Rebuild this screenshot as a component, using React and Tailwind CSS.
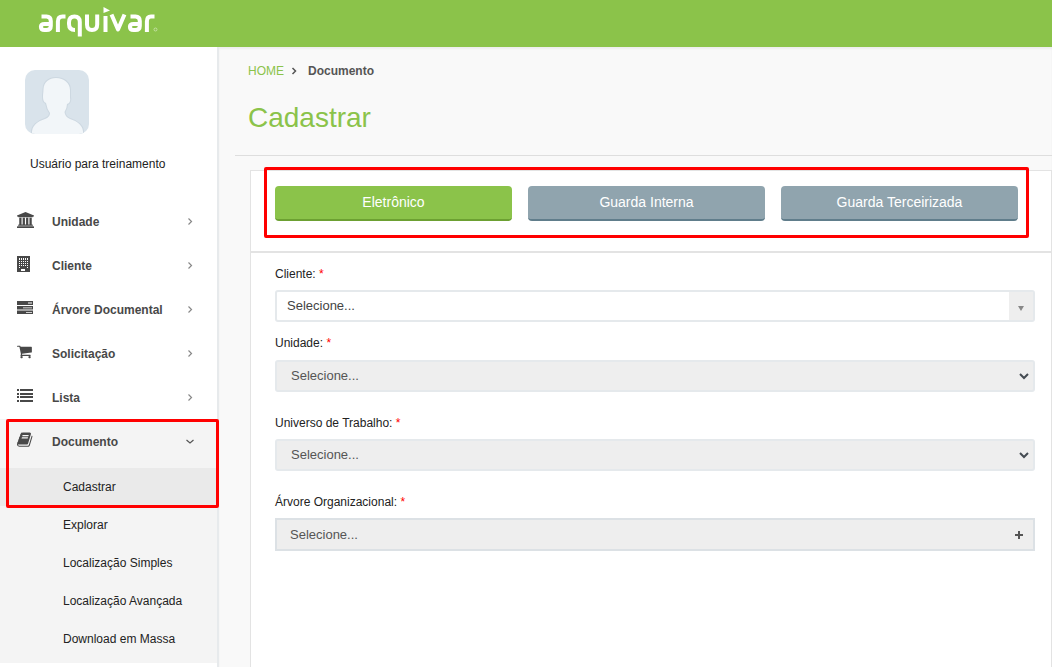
import React from "react";

const stroke = { fill: "none", stroke: "currentColor" };

function Logo() {
  return (
    <svg role="img" aria-label="arquivar" viewBox="0 0 120 32" className="h-8 w-[120px] text-white">
      <g {...stroke} strokeWidth="4" strokeLinejoin="round">
        <path d="M3.500 9.500H8.500Q12.800 9.500 12.800 14V19Q12.800 23 8.500 23H6.500Q2.900 23 2.900 19.800Q2.900 17 6.500 17H12" />
        <path d="M19.900 25V14.500Q19.900 9.500 24.500 9.500H27.500" />
        <path d="M37 23Q31 23 31 17V15.500Q31 9.500 36.500 9.500Q41.800 9.500 41.800 15V29.500" />
        <path d="M49 7.500V17.500Q49 23 54 23Q59.200 23 59.200 17.500V7.500" />
        <path d="M67.500 25V9" />
        <path d="M73.500 7.500L80 22.500L86.500 7.500" />
        <path d="M92.500 9.500H97.500Q101.800 9.500 101.800 14V19Q101.800 23 97.500 23H95.500Q91.900 23 91.900 19.800Q91.900 17 95.500 17H101" />
        <path d="M108.900 25V14.500Q108.900 9.500 113 9.500H116.500" />
      </g>
      <path d="M65.500 0L72 3.500L65.500 6Z" fill="currentColor" />
      <circle cx="117.500" cy="22.500" r="1.500" {...stroke} strokeWidth="0.600" opacity="0.700" />
    </svg>
  );
}

function Avatar() {
  const body = "M7 64C6 56 13 51 20 49Q25 47 25 43Q22 39 21 33Q18 32 18 27C18 23 18.500 22 18.500 19C19 12 24 8 31 8C39 8 45 13 45 20V27Q46 33 42 34Q42 38 39.500 42Q40 47 45 49C52 51 59 56 58 64Z";
  return (
    <svg role="img" aria-label="Foto do usuário" viewBox="0 0 64 64" className="size-16 rounded-[10px] bg-[#d9e3eb]">
      <path d={body} {...stroke} strokeWidth="2" className="text-[#c5d1da]" opacity="0.600" />
      <path d={body} fill="#f2f6f9" />
    </svg>
  );
}

const shapes = {
  bank: ["0 0 1920 1792", "M960 0l960 384v128h-128q0 26-20.5 45t-48.5 19h-1526q-28 0-48.5-19t-20.5-45h-128v-128zM256 640h256v768h128v-768h256v768h128v-768h256v768h128v-768h256v768h59q28 0 48.5 19t20.5 45v64h-1664v-64q0-26 20.5-45t48.5-19h59v-768zM1851 1600q28 0 48.5 19t20.5 45v128h-1920v-128q0-26 20.5-45t48.5-19h1782z", "h-4 w-[17px]"],
  building: ["0 0 13 16", "M0 0h13v16H0zM2 2v2h1V2zM4 2v2h1V2zM6 2v2h1V2zM8 2v2h1V2zM10 2v2h1V2zM2 5v1h1V5zM4 5v1h1V5zM6 5v1h1V5zM8 5v1h1V5zM10 5v1h1V5zM2 7v1h1V7zM4 7v1h1V7zM6 7v1h1V7zM8 7v1h1V7zM10 7v1h1V7zM2 9v1h1V9zM4 9v1h1V9zM6 9v1h1V9zM8 9v1h1V9zM10 9v1h1V9zM2 11v1h1v-1zM10 11v1h1v-1zM4 13v2h4v-2z", "h-4 w-[13px]"],
  tasks: ["0 0 16 16", "M0 1h16v4H0zM11 2.500v1h4v-1zM0 6h16v3.500H0zM6 7.500v.8h9v-.8zM0 10.500h16V14H0zM9 12v.8h6V12z", "size-4"],
  cart: ["64 128 1792 1664", "M704 1536q0 52-38 90t-90 38-90-38-38-90 38-90 90-38 90 38 38 90zm896 0q0 52-38 90t-90 38-90-38-38-90 38-90 90-38 90 38 38 90zm128-1088v512q0 24-16.500 42.500t-40.500 21.500l-1044 122q13 60 13 70 0 16-24 64h920q26 0 45 19t19 45-19 45-45 19h-1024q-26 0-45-19t-19-45q0-11 8-31.500t16-36 21.500-40 15.500-29.500l-177-823h-204q-26 0-45-19t-19-45 19-45 45-19h256q16 0 28.500 6.500t19.500 15.500 13 24.500 8 26 5.500 29.500 4.500 26h1201q26 0 45 19t19 45z", "size-4"],
  list: ["0 0 16 16", "M0 1h2v2H0zM3 1h13v2H3zM0 5h2v2H0zM3 5h13v2H3zM0 8h2v2H0zM3 8h13v2H3zM0 12h2v2H0zM3 12h13v2H3z", "size-4"],
  book: ["64 64 1728 1728", "M1703 478q40 57 18 129l-275 906q-19 64-76.500 107.500t-122.500 43.500h-923q-77 0-148.500-53.500t-99.500-131.500q-24-67-2-127 0-4 3-27t4-37q1-8-3-21.500t-3-19.500q2-11 8-21t16.500-23.500 16.500-23.500q23-38 45-91.500t30-91.500q3-10 .5-30t-.5-28q3-11 17-28t17-23q21-36 42-92t25-90q1-9-2.500-32t.5-28q4-13 22-30.500t22-22.500q19-26 42.500-84.500t27.500-96.500q1-8-3-25.500t-2-26.500q2-8 9-18t18-23 17-21q8-12 16.500-30.500t15-35 16-36 19.500-32 26.500-23.500 36-11.500 47.500 5.500l-1 3q38-9 51-9h761q74 0 114 56t18 130l-274 906q-36 119-71.500 153.500t-128.500 34.500h-869q-27 0-38 15-11 16-1 43 24 70 144 70h923q29 0 56-15.500t35-41.500l300-987q7-22 5-57 38 15 59 43zm-1064 2q-4 13 2 22.500t20 9.500h608q13 0 25.500-9.500t16.500-22.500l21-64q4-13-2-22.500t-20-9.500h-608q-13 0-25.500 9.500t-16.500 22.500zm-83 256q-4 13 2 22.500t20 9.500h608q13 0 25.500-9.500t16.500-22.500l21-64q4-13-2-22.500t-20-9.500h-608q-13 0-25.500 9.500t-16.500 22.500z", "size-4"],
};

function MenuIcon({ name }) {
  const [viewBox, d, size] = shapes[name];
  const cutOut = name === "building" || name === "tasks";
  return (
    <span className="flex w-[35px] shrink-0 pb-1">
      <svg aria-hidden="true" viewBox={viewBox} className={size} fill="currentColor" fillRule={cutOut ? "evenodd" : "nonzero"}>
        <path d={d} />
      </svg>
    </span>
  );
}

function Chevron({ down, className }) {
  return (
    <svg aria-hidden="true" viewBox="0 0 8 8" className={className} {...stroke} strokeWidth="1.200">
      <path d={down ? "M0.500 2L4 5L7.500 2" : "M2.500 0.500L5.500 3.500L2.500 6.500"} />
    </svg>
  );
}

const menu = [
  ["bank", "Unidade"],
  ["building", "Cliente"],
  ["tasks", "Árvore Documental"],
  ["cart", "Solicitação"],
  ["list", "Lista"],
];
const submenu = ["Explorar", "Localização Simples", "Localização Avançada", "Download em Massa"];

function Sidebar() {
  return (
    <aside className="w-[219px] shrink-0 border-r-2 border-[#e7eaec] bg-white">
      <div className="px-[25px] pt-[23px]">
        <Avatar />
      </div>
      <p className="mt-5 px-[30px] text-[12px] leading-5 text-[#222]">Usuário para treinamento</p>
      <nav className="mt-[25px]">
        {menu.map(([icon, label]) => (
          <a key={label} href="#" className="flex h-11 items-center pt-0.5 pr-[23px] pl-[17px] text-[12px] font-bold text-[#484848]">
            <MenuIcon name={icon} />
            <span className="flex-1">{label}</span>
            <Chevron className="size-2 text-[#888]" />
          </a>
        ))}
        <div className="relative bg-[#f4f4f4] pb-[5px]">
          <a href="#" className="flex h-[49px] items-center pr-[23px] pb-1 pl-[17px] text-[12px] font-bold text-[#484848]">
            <MenuIcon name="book" />
            <span className="flex-1">Documento</span>
            <Chevron down className="size-2 text-[#555]" />
          </a>
          <a href="#" className="flex h-[38px] items-center bg-[#eaeaea] pl-[63px] text-[12px] text-[#222]">Cadastrar</a>
          {submenu.map((label) => (
            <a key={label} href="#" className="flex h-[38px] items-center pl-[63px] text-[12px] text-[#222]">{label}</a>
          ))}
          <div className="pointer-events-none absolute top-0 -right-0.5 left-1.5 h-[89px] rounded-xs border-3 border-[#ff0000]" />
        </div>
      </nav>
    </aside>
  );
}

function Label({ htmlFor, children }) {
  return (
    <label htmlFor={htmlFor} className="block text-[12px] leading-5 text-[#222]">
      {children}: <span className="text-[#ff0000]">*</span>
    </label>
  );
}

function DisabledSelect({ id }) {
  return (
    <div className="relative">
      <select id={id} disabled className="block h-8 w-full appearance-none rounded-[3px] border-2 border-[#e5e9ec] bg-[#eee] px-3.5 text-[13px] text-[#555] opacity-100">
        <option>Selecione...</option>
      </select>
      <svg aria-hidden="true" viewBox="0 0 10 8" className="pointer-events-none absolute top-3 right-1.5 h-2 w-2.5 text-[#444b52]" {...stroke} strokeWidth="2">
        <path d="M1 2L5 6L9 2" />
      </svg>
    </div>
  );
}

const tabBase = "h-[35px] flex-1 rounded-[4px] border-b-2 text-[14px] text-white";

export default function App() {
  return (
    <div className="flex min-h-screen flex-col bg-[#f9f9f9] font-['Liberation_Sans',Arial,sans-serif]">
      <header className="h-[47px] bg-[#8bc34a] px-[38px] pt-[7px]">
        <Logo />
      </header>
      <div className="flex flex-1">
        <Sidebar />
        <main className="flex min-w-0 flex-1 flex-col pl-4 shadow-[inset_0_2px_2px_#eee]">
          <div className="border-b border-[#dedede] px-[13px] pt-3.5 pb-5">
            <nav aria-label="Trilha" className="flex items-center text-[12px] leading-5">
              <a href="#" className="text-[#8bc34a]">HOME</a>
              <svg aria-hidden="true" viewBox="0 0 8 8" className="mr-2.5 ml-1.5 size-2 text-[#555]" {...stroke} strokeWidth="1.500">
                <path d="M2.500 1L5.500 4L2.500 7" />
              </svg>
              <span className="font-bold text-[#555]">Documento</span>
            </nav>
            <h1 className="mt-5 text-[28px] leading-[34px] text-[#8bc34a]">Cadastrar</h1>
          </div>
          <section className="mt-3.5 ml-[15px] flex-1 border border-b-0 border-[#e3e3e3] bg-white">
            <div className="relative flex h-20 gap-4 px-6 pt-[15px] pr-[33px]">
              <button type="button" className={`${tabBase} border-[#6ca032] bg-[#8bc34a]`}>Eletrônico</button>
              <button type="button" className={`${tabBase} border-[#607d8b] bg-[#90a4ae]`}>Guarda Interna</button>
              <button type="button" className={`${tabBase} border-[#607d8b] bg-[#90a4ae]`}>Guarda Terceirizada</button>
              <div className="pointer-events-none absolute -top-1 right-[22px] left-[13px] h-[71px] rounded-xs border-3 border-[#ff0000]" />
            </div>
            <form className="border-t-2 border-[#e3e3e3] pt-[11px] pr-4 pl-6">
              <Label htmlFor="cliente">Cliente</Label>
              <div className="relative mt-1.5">
                <select id="cliente" className="block h-8 w-full appearance-none rounded-[3px] border-2 border-[#e5e9ec] bg-white px-2.5 text-[13px] text-[#444]">
                  <option>Selecione...</option>
                </select>
                <span aria-hidden="true" className="pointer-events-none absolute inset-y-0.5 right-0.5 flex w-6 justify-center bg-[#eee] pt-3.5">
                  <svg viewBox="0 0 6 5" className="h-[5px] w-1.5"><path d="M0 0H6L3 5Z" fill="#888" /></svg>
                </span>
              </div>
              <div className="mt-[11px]">
                <Label htmlFor="unidade">Unidade</Label>
                <div className="mt-[7px]"><DisabledSelect id="unidade" /></div>
              </div>
              <div className="mt-[21px]">
                <Label htmlFor="universo">Universo de Trabalho</Label>
                <div className="mt-1.5"><DisabledSelect id="universo" /></div>
              </div>
              <div className="mt-[21px]">
                <Label htmlFor="arvore">Árvore Organizacional</Label>
                <button id="arvore" type="button" className="mt-1.5 flex h-[33px] w-full items-center justify-between border-2 border-[#dce1e5] bg-[#eee] pr-2.5 pl-[13px] text-[13px] text-[#555]">
                  Selecione...
                  <svg aria-hidden="true" viewBox="0 0 8 8" className="size-2" {...stroke} strokeWidth="2"><path d="M4 0V8M0 4H8" /></svg>
                </button>
              </div>
            </form>
          </section>
        </main>
      </div>
    </div>
  );
}
